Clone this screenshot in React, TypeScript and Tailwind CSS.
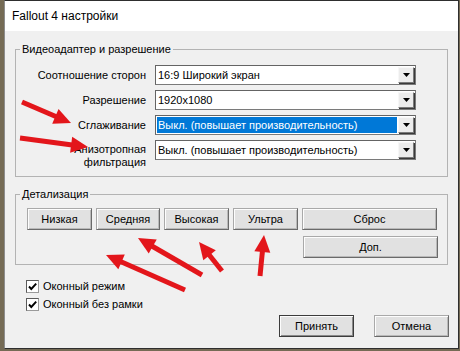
import React from "react";

const RED = "#e3161b";

function Arrow({ x1, y1, x2, y2 }: { x1: number; y1: number; x2: number; y2: number }) {
  const dx = x2 - x1;
  const dy = y2 - y1;
  const len = Math.hypot(dx, dy);
  const ux = dx / len;
  const uy = dy / len;
  const L = 17;
  const W = 8;
  const bx = x2 - ux * L;
  const by = y2 - uy * L;
  const px = -uy;
  const py = ux;
  return (
    <g>
      <line x1={x1} y1={y1} x2={bx + ux * 3} y2={by + uy * 3} stroke={RED} strokeWidth={5} />
      <polygon
        points={`${x2},${y2} ${bx + px * W},${by + py * W} ${bx - px * W},${by - py * W}`}
        fill={RED}
      />
    </g>
  );
}

function Select({ text, selected }: { text: string; selected?: boolean }) {
  return (
    <div className="flex h-[20px] w-[261px] items-stretch border border-[#7a7a7a] border-t-[#646464] border-l-[#646464] bg-white p-[1px]">
      <div
        className={
          selected
            ? "flex flex-1 items-center whitespace-nowrap bg-[#0078d7] pl-[1px] text-white"
            : "flex flex-1 items-center whitespace-nowrap pl-[1px] text-black"
        }
      >
        {text}
      </div>
      <div className="ml-[1px] flex w-[16px] items-center justify-center border border-[#f7f7f7] border-r-[#7a7a7a] border-b-[#7a7a7a] bg-[#ececec] shadow-[1px_1px_0_#3a3a3a]">
        <svg width="7" height="4" viewBox="0 0 7 4">
          <polygon points="0,0 7,0 3.5,4" fill="#000" />
        </svg>
      </div>
    </div>
  );
}

function Btn({ label, w, def }: { label: string; w: string; def?: boolean }) {
  return (
    <div
      className={
        def
          ? `flex h-[22px] ${w} items-center justify-center border border-[#3c3c3c] bg-[#e1e1e1] text-black shadow-[inset_1px_1px_0_#fdfdfd,inset_-1px_-1px_0_#8a8a8a]`
          : `flex h-[22px] ${w} items-center justify-center border border-[#a9a9a9] border-r-[#6a6a6a] border-b-[#6a6a6a] bg-[#e1e1e1] text-black shadow-[inset_1px_1px_0_#fdfdfd,inset_-1px_-1px_0_#b9b9b9]`
      }
    >
      {label}
    </div>
  );
}

function Check({ label }: { label: string }) {
  return (
    <div className="flex h-[18px] items-center">
      <div className="flex h-[13px] w-[13px] items-center justify-center border border-[#5a5a5a] border-r-[#9a9a9a] border-b-[#9a9a9a] bg-white">
        <svg width="11" height="11" viewBox="0 0 11 11">
          <path d="M2 5.5 L4.3 8 L9.2 2.6" stroke="#000" strokeWidth="1.9" fill="none" />
        </svg>
      </div>
      <span className="ml-[4px] text-black">{label}</span>
    </div>
  );
}

function Row({ label, children, two }: { label: React.ReactNode; children: React.ReactNode; two?: boolean }) {
  return (
    <div className="flex items-start">
      <div
        className={
          two
            ? "w-[130px] pt-[3px] text-right leading-[13px] text-black"
            : "flex h-[20px] w-[130px] items-center justify-end text-black"
        }
      >
        {label}
      </div>
      <div className="ml-[9px]">{children}</div>
    </div>
  );
}

export default function App() {
  return (
    <div className="relative h-[351px] w-[460px] overflow-hidden bg-[#756b55] font-['Liberation_Sans',Arial,sans-serif] text-[11px]">
      <div className="ml-[4px] flex h-[349px] w-[455px] flex-col border border-[#2e2e2e] border-l-[#8d8d8d]">
        <div className="flex h-[30px] items-center bg-white px-[7px] text-[12px] text-black">Fallout 4 настройки</div>
        <div className="flex flex-1 flex-col bg-[#f0f0f0]">
          <fieldset className="mx-[10px] mt-[11px] border border-[#b3b3b3] pb-[7px]">
            <legend className="ml-[4px] px-[2px] leading-[15px] text-black">Видеоадаптер и разрешение</legend>
            <div className="flex flex-col gap-[5px] pt-[8px]">
              <Row label="Соотношение сторон">
                <Select text="16:9 Широкий экран" />
              </Row>
              <Row label="Разрешение">
                <Select text="1920x1080" />
              </Row>
              <Row label="Сглаживание">
                <Select text="Выкл. (повышает производительность)" selected />
              </Row>
              <Row
                two
                label={
                  <>
                    Анизотропная
                    <br />
                    фильтрация
                  </>
                }
              >
                <Select text="Выкл. (повышает производительность)" />
              </Row>
            </div>
          </fieldset>
          <fieldset className="mx-[10px] mt-[10px] border border-[#b3b3b3] pb-[6px] pl-[11px]">
            <legend className="ml-[-7px] px-[2px] leading-[15px] text-black">Детализация</legend>
            <div className="flex flex-col gap-[6px] pt-[6px]">
              <div className="flex gap-[4px]">
                <Btn label="Низкая" w="w-[65px]" />
                <Btn label="Средняя" w="w-[64px]" />
                <Btn label="Высокая" w="w-[65px]" />
                <Btn label="Ультра" w="w-[65px]" />
                <Btn label="Сброс" w="w-[135px]" />
              </div>
              <div className="flex justify-end pr-[9px]">
                <Btn label="Доп." w="w-[135px]" />
              </div>
            </div>
          </fieldset>
          <div className="mt-[12px] flex flex-col pl-[21px]">
            <Check label="Оконный режим" />
            <Check label="Оконный без рамки" />
          </div>
          <div className="mt-[2px] flex justify-end gap-[20px] pr-[9px]">
            <Btn label="Принять" w="w-[75px]" def />
            <Btn label="Отмена" w="w-[75px]" />
          </div>
        </div>
      </div>
      <svg className="pointer-events-none absolute left-0 top-0" width="460" height="351" viewBox="0 0 460 351">
        <Arrow x1={22} y1={102} x2={71} y2={123} />
        <Arrow x1={20} y1={138} x2={88} y2={147} />
        <Arrow x1={185} y1={290} x2={106} y2={255} />
        <Arrow x1={202} y1={275} x2={138} y2={238} />
        <Arrow x1={222} y1={271} x2={199} y2={242} />
        <Arrow x1={260} y1={276} x2={264} y2={235} />
      </svg>
    </div>
  );
}
